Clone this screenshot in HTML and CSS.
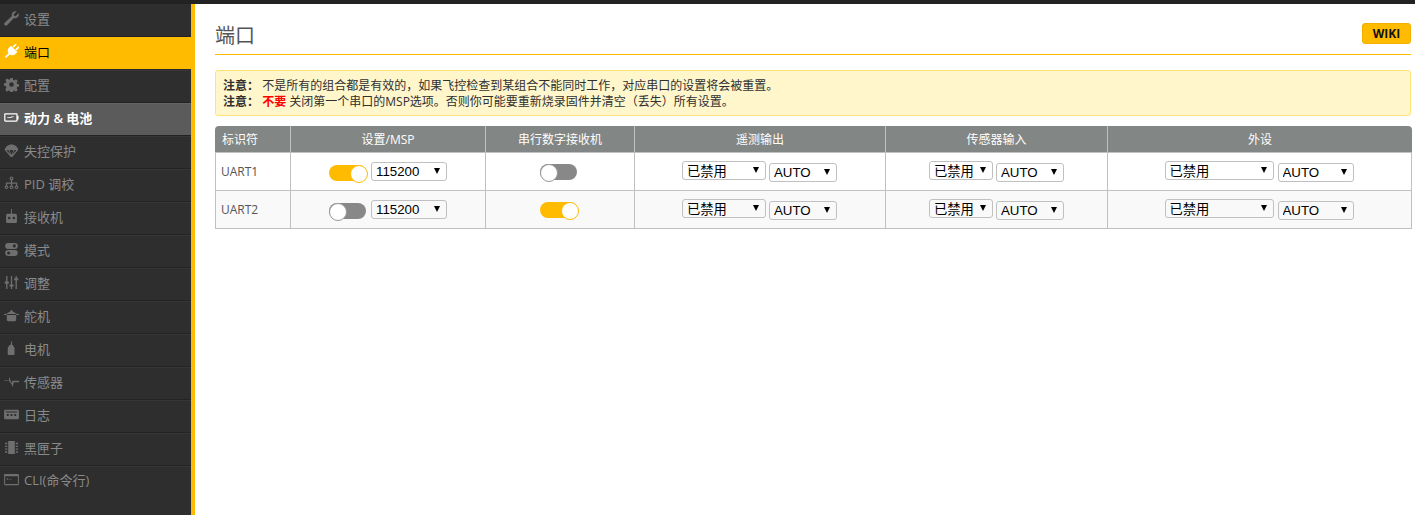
FILE: index.html
```html
<!DOCTYPE html>
<html lang="zh-CN">
<head>
<meta charset="utf-8">
<title>端口</title>
<link rel="stylesheet" href="styles.css">
</head>
<body>
<div class="topbar"></div>
<div class="main">
  <nav class="sidebar">
    <a class="item"><svg class="ico" viewBox="0 0 16 16"><path d="M15.500 2.500 12.300 5.500l-1.600-.4-.4-1.600L13.500.5C11-.5 8.300 1.200 8.200 3.700c0 .6.100 1.200.3 1.700L1 12.300c-1 1-1 2.200-.2 2.900s1.900.7 2.800-.3l6.900-7.400c2.800.9 5.700-1.300 5.400-4.100 0-.3-.2-.6-.4-.9z"/></svg><span>设置</span></a>
    <a class="item active"><svg class="ico" viewBox="0 0 16 16"><g transform="rotate(45 8 8)"><path d="M5 -1h1.800v4.500H5zM9.200 -1H11v4.500H9.200zM3.200 4h9.600v2.800a4.800 4.800 0 0 1-3.900 4.700V17H7.100v-5.500a4.800 4.800 0 0 1-3.900-4.700z"/></g></svg><span>端口</span></a>
    <a class="item"><svg class="ico" viewBox="0 0 16 16"><path fill-rule="evenodd" d="M6.700 1h2.600l.4 2 1.300.6 1.800-1.100 1.800 1.800-1.100 1.800.6 1.300 2 .4v2.400l-2 .5-.6 1.300 1.100 1.700-1.800 1.900-1.800-1.100-1.300.5-.4 2H6.700l-.4-2-1.300-.5-1.800 1.100-1.800-1.900L2.500 11l-.6-1.300-2-.5V6.800l2-.4.600-1.300-1.100-1.800 1.800-1.800 1.800 1.100L6.300 3zM8 5.500a2.500 2.500 0 1 0 0 5 2.500 2.500 0 0 0 0-5z"/></svg><span>配置</span></a>
    <a class="item power"><svg class="ico" viewBox="0 0 16 16"><path fill-rule="evenodd" d="M1.500 3.500h11.800c.7 0 1.200.5 1.200 1v1.500h1v4h-1v1.500c0 .5-.5 1-1.200 1H1.500c-.8 0-1.300-.5-1.300-1v-7c0-.5.500-1 1.300-1zm0 1.300v6.400h11.700V4.800z"/><path d="M3.500 7.800h3.300l1-1h2.700v.8H8.400l-.8 1H3.500z"/></svg><span>动力 &amp; 电池</span></a>
    <a class="item"><svg class="ico" viewBox="0 0 16 16"><path fill-rule="evenodd" d="M8 1.500C4.200 1.500 1.300 4 .8 7.500L7.200 15h1.600l6.400-7.500C14.700 4 11.800 1.500 8 1.500zM2.800 8c.6-.8 1.600-.8 2.300 0l2 4.300zm3.200 0c1.200-.7 2.800-.7 4 0l-2 4.700zm7.200 0c-.6-.8-1.600-.8-2.300 0l-2 4.300z"/></svg><span>失控保护</span></a>
    <a class="item"><svg class="ico" viewBox="0 0 16 16"><path fill-rule="evenodd" d="M8 .5a2 2 0 0 1 .7 3.900V7h5.300v3.100a2 2 0 1 1-1.300 0V8.300H8.700v1.800a2 2 0 1 1-1.400 0V8.300H3.300v1.800a2 2 0 1 1-1.300 0V7h5.300V4.400A2 2 0 0 1 8 .5zm0 1.200a.8.800 0 1 0 0 1.600.8.800 0 0 0 0-1.600zM2.700 11.200a.8.800 0 1 0 0 1.600.8.800 0 0 0 0-1.600zm5.300 0a.8.800 0 1 0 0 1.600.8.800 0 0 0 0-1.600zm5.300 0a.8.800 0 1 0 0 1.600.8.800 0 0 0 0-1.600z"/></svg><span>PID 调校</span></a>
    <a class="item"><svg class="ico" viewBox="0 0 16 16"><path fill-rule="evenodd" d="M7.500 0h1v5H12c1 0 1.800.8 1.800 1.800v6.400c0 1-.8 1.800-1.800 1.800H4c-1 0-1.800-.8-1.800-1.800V6.800C2.200 5.800 3 5 4 5h3.500zM5.500 8.200a1.400 1.400 0 1 0 0 2.800 1.400 1.400 0 0 0 0-2.800zm5 0a1.400 1.400 0 1 0 0 2.800 1.400 1.400 0 0 0 0-2.800z"/></svg><span>接收机</span></a>
    <a class="item"><svg class="ico" viewBox="0 0 16 16"><path fill-rule="evenodd" d="M4.500 1h7a3 3 0 0 1 0 6.500h-7a3 3 0 0 1 0-6.500zm6.500 1.500a1.700 1.700 0 1 0 0 3.400 1.700 1.700 0 0 0 0-3.400zM4.500 8.500h7a3 3 0 0 1 0 6.500h-7a3 3 0 0 1 0-6.500zM5 10a1.700 1.700 0 1 0 0 3.400A1.700 1.700 0 0 0 5 10z"/></svg><span>模式</span></a>
    <a class="item"><svg class="ico" viewBox="0 0 16 16"><path d="M2.300 1h1.400v6h1.500v2.200H3.700V15H2.300V9.200H.8V7h1.500zM7.300 1h1.400v9h1.500v2.200H8.700V15H7.300v-2.800H5.800V10h1.500zM12.300 1h1.400v2.500h1.500v2.200h-1.500V15h-1.400V5.700h-1.500V3.500h1.500z"/></svg><span>调整</span></a>
    <a class="item"><svg class="ico" viewBox="0 0 16 16"><path d="M8 2c.6 0 1 .4 1 .8v.6l5 3.100H2l5-3.100v-.6C7 2.400 7.400 2 8 2zM3 7.500h10v5c0 .8-.7 1.500-1.500 1.500h-7C3.700 14 3 13.300 3 12.500zM0 6.300h3v1.200H0zM13 6.300h3v1.200h-3z"/></svg><span>舵机</span></a>
    <a class="item"><svg class="ico" viewBox="0 0 16 16"><path d="M7.400.5h1.200V4c1 .3 1.400 1 1.600 2 .2.100.8.400 1 1.100V14c0 .6-.5 1-1 1H5c-.5 0-1-.4-1-1V7.100C4.200 6.400 4.800 6.100 5 6c.2-1 .6-1.700 1.600-2H7.400z"/></svg><span>电机</span></a>
    <a class="item"><svg class="ico" viewBox="0 0 16 16"><path d="M0 7.300h4.800l1.300-4 1.600 8.200 1.400-4.200.6 0h6.300v1.400H10.500l-1.400 5.300-1.700-6.800-.9 3.200-1.100-3.700H0z"/></svg><span>传感器</span></a>
    <a class="item"><svg class="ico" viewBox="0 0 16 16"><path fill-rule="evenodd" d="M1.500 3h13c.8 0 1.400.6 1.400 1.400v7.200c0 .8-.6 1.400-1.400 1.400h-13C.7 13 .100 12.400.100 11.600V4.400C.100 3.600.700 3 1.500 3zM2 4.800v1h12v-1zM3 7.500v2.200h2V7.500zm4 0v2.200h2V7.500zm4 0v2.200h2V7.500z"/></svg><span>日志</span></a>
    <a class="item"><svg class="ico" viewBox="0 0 16 16"><path d="M4.500 1h7v14h-7zM1 3h2.500v1.500H1zM1 6h2.500v1.500H1zM1 9h2.500v1.500H1zM1 12h2.500v1.500H1zM12.500 3H15v1.500h-2.500zM12.500 6H15v1.500h-2.500zM12.500 9H15v1.500h-2.500zM12.500 12H15v1.500h-2.500z"/></svg><span>黑匣子</span></a>
    <a class="item last"><svg class="ico" viewBox="0 0 16 16"><path fill-rule="evenodd" d="M1 2h14c.5 0 .9.400.9.900v10.200c0 .5-.4.900-.9.900H1c-.5 0-.9-.4-.9-.9V2.900C.100 2.400.500 2 1 2zm.2 2.500v8.300h13.600V4.500z"/><path d="M3 6.500l2 1-2 1zM5.500 8h2.500v.6H5.500z"/></svg><span>CLI(命令行)</span></a>
  </nav>
  <main class="content">
    <header class="title-row">
      <h1 class="title">端口</h1>
      <a class="wiki">WIKI</a>
    </header>
    <div class="note">
      <p><strong>注意：</strong>&nbsp;不是所有的组合都是有效的，如果飞控检查到某组合不能同时工作，对应串口的设置将会被重置。</p>
      <p><strong>注意：</strong>&nbsp;<strong class="red">不要</strong> 关闭第一个串口的MSP选项。否则你可能要重新烧录固件并清空（丢失）所有设置。</p>
    </div>
    <table class="ports">
      <colgroup>
        <col class="c1"><col class="c2"><col class="c3"><col class="c4"><col class="c5"><col class="c6">
      </colgroup>
      <thead>
        <tr><th>标识符</th><th>设置/MSP</th><th>串行数字接收机</th><th>遥测输出</th><th>传感器输入</th><th>外设</th></tr>
      </thead>
      <tbody>
        <tr>
          <td class="id">UART1</td>
          <td><div class="cell"><span class="toggle on"></span><span class="sel w76"><select><option>115200</option></select></span></div></td>
          <td><div class="cell solo"><span class="toggle"></span></div></td>
          <td><div class="cell pair nudge"><span class="sel w84 up"><select><option>已禁用</option></select></span><span class="sel w68 down"><select><option>AUTO</option></select></span></div></td>
          <td><div class="cell pair"><span class="sel w64 up"><select><option>已禁用</option></select></span><span class="sel w68 down"><select><option>AUTO</option></select></span></div></td>
          <td><div class="cell pair wide"><span class="sel w109 up"><select><option>已禁用</option></select></span><span class="sel w76 down"><select><option>AUTO</option></select></span></div></td>
        </tr>
        <tr class="alt">
          <td class="id">UART2</td>
          <td><div class="cell"><span class="toggle"></span><span class="sel w76"><select><option>115200</option></select></span></div></td>
          <td><div class="cell solo"><span class="toggle on"></span></div></td>
          <td><div class="cell pair nudge"><span class="sel w84 up"><select><option>已禁用</option></select></span><span class="sel w68 down"><select><option>AUTO</option></select></span></div></td>
          <td><div class="cell pair"><span class="sel w64 up"><select><option>已禁用</option></select></span><span class="sel w68 down"><select><option>AUTO</option></select></span></div></td>
          <td><div class="cell pair wide"><span class="sel w109 up"><select><option>已禁用</option></select></span><span class="sel w76 down"><select><option>AUTO</option></select></span></div></td>
        </tr>
      </tbody>
    </table>
  </main>
</div>
</body>
</html>
```

FILE: styles.css
```css
* { box-sizing: border-box; }
html, body { margin: 0; height: 100%; overflow: hidden; }
body {
  background: #fff;
  color: #303030;
  font-family: "Open Sans", "Noto Sans CJK SC", sans-serif;
  font-size: 12px;
}
.topbar { height: 4px; background: #222; }
.main { display: flex; height: 511px; }

.sidebar {
  width: 195px;
  flex: none;
  background: #2e2e2e;
  border-right: 4px solid #ffbb00;
}
.item {
  display: flex;
  align-items: center;
  height: 33px;
  padding: 0 0 5px 4px;
  gap: 5px;
  color: #8a8a8a;
  font-size: 13px;
  border-top: 1px solid #363636;
  border-bottom: 1px solid #232323;
}
.item:first-child { border-top: 1px solid #2e2e2e; }
.item.last { border-bottom: 0; height: 31px; }
.ico { width: 15px; height: 15px; fill: #6f6f6f; flex: none; }
.item.active { background: #ffbb00; color: #000; border-top-color: #ffbb00; border-bottom-color: #2a2a2a; }
.item.active .ico { fill: #fff; }
.item.power { background: #5b5b5b; color: #fff; font-weight: 600; border-top-color: #646464; }
.item.power .ico { fill: #fff; }

.content { flex: 1; padding: 0 4px 0 20px; min-width: 0; }
.title-row {
  display: flex;
  justify-content: space-between;
  align-items: center;
  height: 51px;
  padding-top: 14px;
  border-bottom: 1px solid #ffbb00;
}
.title { margin: 0; font-size: 20px; font-weight: 400; color: #555; line-height: 26px; }
.wiki {
  display: block;
  width: 49px;
  height: 21px;
  line-height: 19px;
  margin-top: -5px;
  text-align: center;
  background: #ffbb00;
  border: 1px solid #f0b000;
  border-radius: 3px;
  color: #111;
  font-size: 12px;
  font-weight: 700;
}
.note {
  height: 46px;
  margin-top: 15px;
  padding: 7px 7px 0;
  background: #fff6cc;
  border: 1px solid #ffe27a;
  border-radius: 3px;
  font-size: 12px;
  line-height: 16px;
  color: #303030;
}
.note p { margin: 0; white-space: nowrap; }
.note strong { font-weight: 700; }
.note .red { color: #ff0000; }

.ports {
  margin-top: 10px;
  width: 1197px;
  table-layout: fixed;
  border-collapse: separate;
  border-spacing: 0;
}
.c1 { width: 76px; } .c2 { width: 195px; } .c3 { width: 149px; }
.c4 { width: 251px; } .c5 { width: 222px; } .c6 { width: 304px; }
.ports th {
  height: 27px;
  padding: 0;
  background: #828684;
  color: #fff;
  font-size: 12px;
  font-weight: 400;
  text-align: center;
  border-right: 1px solid #c0c0c0;
  border-bottom: 1px solid #c0c0c0;
}
.ports th:first-child { border-top-left-radius: 4px; padding-left: 7px; text-align: left; }
.ports th:last-child { border-top-right-radius: 4px; border-right: 0; }
.ports td {
  height: 38px;
  padding: 0;
  border-right: 1px solid #c0c0c0;
  border-bottom: 1px solid #c0c0c0;
}
.ports td:first-child { border-left: 1px solid #c0c0c0; }
.ports td.id { padding-left: 5px; font-size: 12px; color: #555; }
.alt td { background: #f9f9f9; }

.cell { display: flex; justify-content: center; align-items: flex-start; gap: 5px; height: 37px; padding-top: 9px; }
.cell.pair { gap: 3px; }
.cell.pair.wide { gap: 4px; padding-right: 1px; }
.cell.nudge { padding-right: 1px; }
.cell.solo { padding-right: 3px; }
.toggle {
  position: relative;
  display: block;
  width: 37px;
  height: 16px;
  margin-top: 3px;
  border-radius: 8px;
  background: #888;
}
.cell.solo .toggle { margin-top: 2px; }
.toggle::after {
  content: "";
  position: absolute;
  left: 0;
  top: 0;
  width: 16px;
  height: 16px;
  border-radius: 50%;
  background: #fff;
  border: 1px solid #999;
}
.toggle.on { background: #ffbb00; }
.toggle.on::after { left: 21px; border-color: #ffbb00; }

.sel { position: relative; display: block; height: 19px; }
.sel.up { margin-top: -1px; }
.sel.up select { padding-top: 1px; }
.sel.down { margin-top: 1px; }
.sel select {
  display: block;
  width: 100%;
  height: 100%;
  padding: 0 0 0 4px;
  appearance: none;
  background: transparent;
  border: 1px solid #c0c0c0;
  border-radius: 3px;
  color: #000;
  font-family: "Liberation Sans", "Noto Sans CJK SC", sans-serif;
  font-size: 13.3px;
  line-height: 17px;
}
.sel::after {
  content: "";
  position: absolute;
  right: 7px;
  top: 6px;
  border-left: 3px solid transparent;
  border-right: 3px solid transparent;
  border-top: 6px solid #000;
  pointer-events: none;
}
.w64 { width: 64px; } .w68 { width: 68px; } .w76 { width: 76px; } .w84 { width: 84px; } .w109 { width: 109px; }
```
